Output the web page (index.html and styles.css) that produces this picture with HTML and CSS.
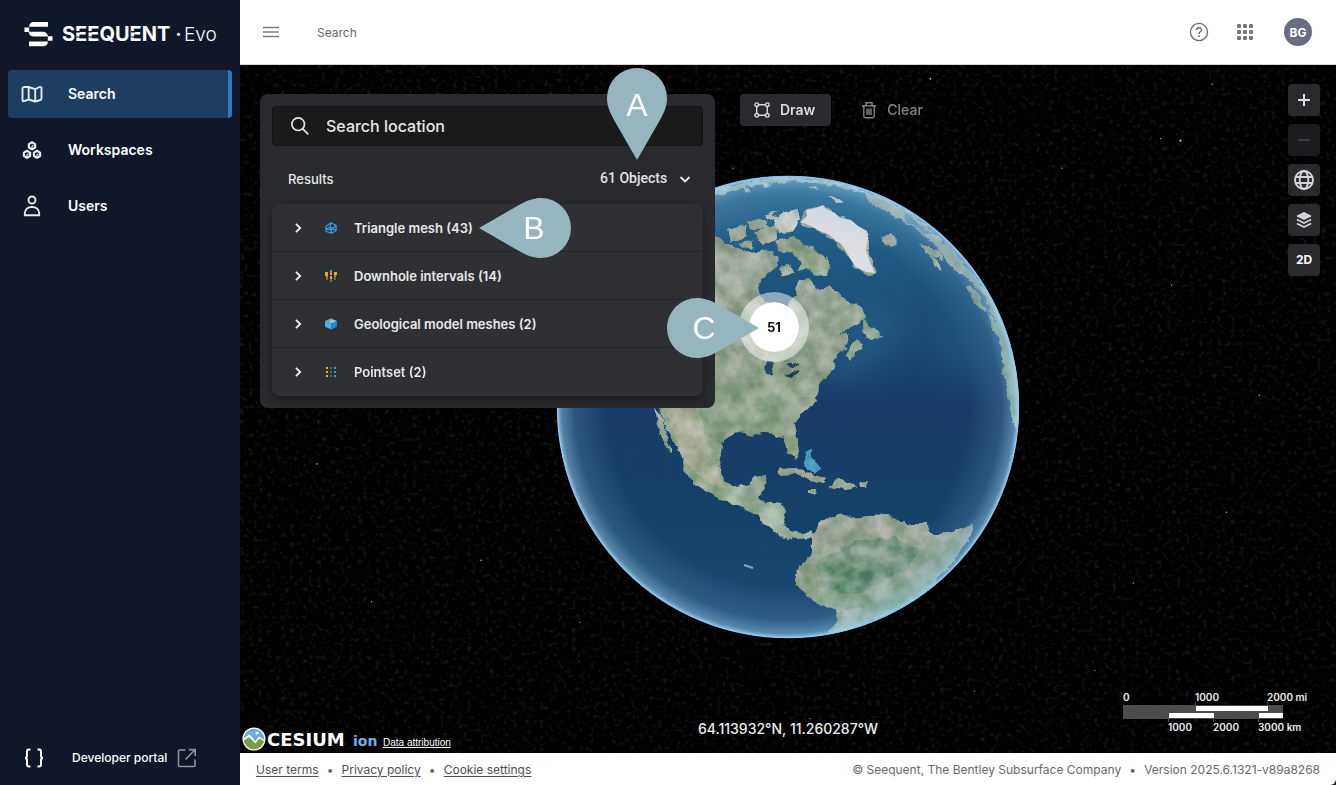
FILE: index.html
```html
<!DOCTYPE html>
<html lang="en">
<head>
<meta charset="utf-8">
<meta name="viewport" content="width=device-width, initial-scale=1">
<title>Seequent Evo – Search</title>
<link rel="stylesheet" href="styles.css">
</head>
<body>
<div class="app">
  <aside class="sidebar">
    <a class="brand" href="#" aria-label="Seequent Evo">
      <svg width="200" height="28" viewBox="0 0 200 28">
        <g fill="#fff">
          <path d="M5 6.200Q5.500 1 9.500 1H24V5.800H5z"/>
          <path d="M0.500 6.500H5.200V10.800H19Q23 10.800 24 15.300H28.500V19.800H23.800V15.600H10Q5.500 15.600 4.600 11H0.500z"/>
          <path d="M5 20.500H24Q23.500 25.300 19 25.300H5z"/>
          <text x="38" y="20" class="brand-name">SEEQUENT</text>
          <circle cx="154.500" cy="13.300" r="1.600"/>
          <text x="160" y="20" class="brand-product">Evo</text>
        </g>
        <path fill="#0f1729" d="M52 10H56V11.500H52zM64.200 10H68.200V11.500H64.200zM107 10H111V11.500H107zM52 15.500H56V16.500H52zM64.200 15.500H68.200V16.500H64.200zM107 15.500H111V16.500H107z"/>
      </svg>
    </a>
    <nav class="nav">
      <a class="nav-item active" href="#" aria-current="page">
        <svg width="24" height="24" viewBox="0 0 24 24" fill="none" stroke="#e4e9ef" stroke-width="1.900" stroke-linejoin="round"><path d="M2.500 6.500Q2.500 5 4 4.900L8.700 5 15.200 7.200 19.800 5Q21.500 4.500 21.500 6V16.500Q21.500 17.500 20.500 18L15.200 19.500 8.700 17.500 4 19.200Q2.500 19.600 2.500 18zM8.700 5V17.500M15.200 7.200V19.500"/></svg>
        Search
      </a>
      <a class="nav-item" href="#">
        <svg width="24" height="24" viewBox="0 0 24 24" fill="none" stroke="#e8eaee" stroke-width="2.200" stroke-linejoin="round"><path d="M12 4.300l3.100 1.800v3.400L12 11.300 8.900 9.500V6.100zM7 12.800l3.100 1.800v3.400L7 19.800l-3.100-1.800v-3.400zM17 12.800l3.100 1.800v3.400L17 19.800l-3.100-1.800v-3.400z"/><path d="M12 11V8.200l1.500-.9M7 19.500v-2.800l1.500-.9M17 19.500v-2.800l1.500-.9" stroke-width="1.200"/></svg>
        Workspaces
      </a>
      <a class="nav-item" href="#">
        <svg width="24" height="24" viewBox="0 0 24 24" fill="none" stroke="#e8eaee" stroke-width="1.900"><circle cx="12" cy="6" r="3.500"/><path d="M4.800 21.200V19.500C4.800 15.500 8 13 12 13s7.200 2.500 7.200 6.500V21.200z" stroke-linejoin="round"/></svg>
        Users
      </a>
    </nav>
    <a class="dev-link" href="#">
      <svg width="24" height="24" viewBox="0 0 24 24" fill="none" stroke="#fff" stroke-width="2"><path d="M8.500 3.500H7Q5 3.500 5 5.500V9.500Q5 12 3 12 5 12 5 14.500V18.500Q5 20.500 7 20.500H8.500M15.500 3.500H17Q19 3.500 19 5.500V9.500Q19 12 21 12 19 12 19 14.500V18.500Q19 20.500 17 20.500H15.500"/></svg>
      <span>Developer portal</span>
      <svg width="20" height="20" viewBox="0 0 20 20" fill="none" stroke="#8d939e" stroke-width="1.600"><path d="M8.500 2H2.500Q1.500 2 1.500 3V17.500Q1.500 18.500 2.500 18.500H17Q18 18.500 18 17.500V11.500M8.500 11.500L17.500 2.200M11.800 1.600H18.200V8"/></svg>
    </a>
  </aside>

  <div class="main">
    <header class="topbar">
      <button class="icon-button" aria-label="Toggle menu">
        <svg width="16" height="16" viewBox="0 0 16 16" stroke="#7c7f82" stroke-width="1.400"><path d="M0 3.500H16M0 8H16M0 12.500H16" /></svg>
      </button>
      <h1 class="page-title">Search</h1>
      <button class="icon-button" aria-label="Help">
        <svg width="20" height="20" viewBox="0 0 20 20"><circle cx="10" cy="10" r="8.600" fill="none" stroke="#66696c" stroke-width="1.300"/><path d="M7.500 8.200C7.500 5 12.600 5 12.500 7.900 12.500 9.800 10 9.800 10 12" fill="none" stroke="#66696c" stroke-width="1.300"/><circle cx="10" cy="14.200" r="0.900" fill="#66696c"/></svg>
      </button>
      <button class="icon-button" aria-label="Applications">
        <svg width="16" height="16" viewBox="0 0 16 16" fill="#74777a"><rect x="0" y="0" width="4" height="4" rx="1.300"/><rect x="6" y="0" width="4" height="4" rx="1.300"/><rect x="12" y="0" width="4" height="4" rx="1.300"/><rect x="0" y="6" width="4" height="4" rx="1.300"/><rect x="6" y="6" width="4" height="4" rx="1.300"/><rect x="12" y="6" width="4" height="4" rx="1.300"/><rect x="0" y="12" width="4" height="4" rx="1.300"/><rect x="6" y="12" width="4" height="4" rx="1.300"/><rect x="12" y="12" width="4" height="4" rx="1.300"/></svg>
      </button>
      <button class="avatar">BG</button>
    </header>

    <main class="map">
      <svg class="stars" aria-hidden="true">
        <filter id="dust" x="0" y="0" width="100%" height="100%"><feTurbulence type="fractalNoise" baseFrequency="0.22" numOctaves="3" seed="8"/><feColorMatrix values="0 0 0 0 0.600  0 0 0 0 0.620  0 0 0 0 0.620  2.200 0 0 0 -1.200"/></filter>
        <rect width="100%" height="100%" filter="url(#dust)" opacity="0.170"/>
        <g fill="#b9bcc0">
          <circle cx="85.800%" cy="11%" r="1.100"/><circle cx="84%" cy="10.700%" r="0.700"/><circle cx="63%" cy="2%" r="0.900"/><circle cx="75%" cy="15%" r="0.600"/><circle cx="88.700%" cy="2.800%" r="0.700"/><circle cx="7%" cy="58%" r="0.800"/><circle cx="35%" cy="11%" r="0.600"/><circle cx="45%" cy="15%" r="0.700"/><circle cx="81.500%" cy="75.300%" r="0.800"/><circle cx="90%" cy="65%" r="0.700"/><circle cx="78%" cy="88%" r="0.600"/><circle cx="12%" cy="78%" r="0.700"/><circle cx="22%" cy="72%" r="0.800"/><circle cx="31%" cy="81%" r="0.600"/><circle cx="85%" cy="32%" r="0.600"/><circle cx="93%" cy="48%" r="0.700"/><circle cx="52%" cy="95%" r="0.700"/><circle cx="67%" cy="91%" r="0.600"/>
        </g>
      </svg>

      <div class="globe-layer">
        <svg class="globe" width="468" height="468" viewBox="554 173 468 468" role="img" aria-label="Globe">
          <defs>
            <clipPath id="disc"><circle cx="788" cy="407" r="231"/></clipPath>
            <linearGradient id="ocean" x1="0" y1="0" x2="0" y2="1"><stop offset="0" stop-color="#2a6c95"/><stop offset="0.250" stop-color="#1c527c"/><stop offset="0.500" stop-color="#173c68"/><stop offset="0.750" stop-color="#154268"/><stop offset="1" stop-color="#1d4a77"/></linearGradient>
            <linearGradient id="land" x1="0" y1="0" x2="0" y2="1"><stop offset="0" stop-color="#a0aaa0"/><stop offset="0.400" stop-color="#97a595"/><stop offset="0.750" stop-color="#8ba48a"/><stop offset="1" stop-color="#a3b8aa"/></linearGradient>
            <radialGradient id="air"><stop offset="0.780" stop-color="#7fb6d6" stop-opacity="0"/><stop offset="0.920" stop-color="#7fb6d6" stop-opacity="0.200"/><stop offset="0.980" stop-color="#96c8e4" stop-opacity="0.500"/><stop offset="1" stop-color="#b8def5" stop-opacity="0.850"/></radialGradient>
            <filter id="soft" x="-50%" y="-50%" width="200%" height="200%" color-interpolation-filters="sRGB"><feGaussianBlur stdDeviation="16"/></filter>
            <filter id="terrain" filterUnits="userSpaceOnUse" x="550" y="170" width="480" height="480">
              <feTurbulence type="fractalNoise" baseFrequency="0.110" numOctaves="4" seed="4" result="n"/>
              <feDisplacementMap in="SourceGraphic" in2="n" scale="7" xChannelSelector="R" yChannelSelector="G"/>
              <feGaussianBlur stdDeviation="0.500" result="s"/>
              <feTurbulence type="fractalNoise" baseFrequency="0.055" numOctaves="5" seed="21"/>
              <feColorMatrix values="2 0 0 0 -0.550  1.500 0.200 0 0 -0.390  1.900 0 0 0 -0.550  0 0 0 0 0.500"/>
              <feComposite operator="in" in2="s" result="t"/>
              <feBlend in="t" in2="s" mode="soft-light"/>
            </filter>
          </defs>
          <g clip-path="url(#disc)">
            <rect x="554" y="173" width="468" height="468" fill="url(#ocean)"/>
            <g filter="url(#soft)">
              <path d="M850 290L905 325 880 360 830 385 825 360 850 330z" fill="#27638b" opacity="0.700"/>
              <path d="M945 300L975 350 970 390 940 345z" fill="#22608a" opacity="0.600"/>
              <path d="M700 190L780 200 760 225 715 230z" fill="#33658e" opacity="0.600"/>
            </g>
            <g filter="url(#terrain)">
              <g fill="url(#land)">
                <path d="M640 300L690 245 715 235 725 243 735 248 750 252 766 250 780 255 776 264 771 271 762 280 758 290 764 300 778 306 783 318 788 304 795 295 798 280 809 278 819 290 830 286 843 298 862 308 866 317 853 325 846 331 835 337 846 333 848 338 843 350 836 356 832 370 822 381 816 400 805 412 794 423 796 435 799 451 796 461 788 451 783 437 767 433 750 436 737 432 724 440 720 463 724 482 737 487 750 485 754 476 767 474 764 489 759 500 780 503 786 510 783 524 790 532 801 534 812 529 813 538 797 539 780 536 769 527 757 515 737 505 717 498 697 485 685 473 683 460 673 440 664 423 660 405z"/>
                <path d="M654 405L661 415 666 432 671 452 664 444 657 425z"/>
                <path d="M813 533L823 520 840 514 850 518 870 516 887 515 900 523 927 523 933 535 953 532 974 524 968 540 953 563 930 587 907 604 880 617 853 628 825 640 837 620 838 611 820 605 805 593 795 582 798 567 810 557 813 543z"/>
                <path d="M778 469L790 467 802 470 826 479 822 484 810 480 797 474 779 475zM829 488L836 480 853 483 859 487 847 490zM861 482L868 482 867 486 860 486zM808 490L816 490 815 493 808 493z"/>
                <path d="M865 194L880 196 903 209 927 226 953 251 977 279 997 303 1012 337 1022 377 1022 437 1014 425 1010 405 1003 372 1000 340 992 327 987 303 979 289 966 277 953 268 945 258 937 247 920 232 907 223 887 212 868 202z"/>
                <path d="M919 242L930 249 940 252 944 260 935 257 925 252zM930 255L937 260 943 269 934 265zM966 284L977 287 985 299 987 314 974 303zM863 318L869 327 880 331 882 338 874 339 864 335zM848 347L858 340 863 344 850 360 847 357zM881 237L889 233 896 237 895 244 887 247z"/>
                <path d="M782 239L795 236 803 243 812 248 829 260 828 278 815 275 808 268 797 271 802 263 793 254zM728 230L746 225 746 237 731 242zM747 222L766 219 768 228 751 229zM753 232L777 225 778 239 762 245zM775 241L790 238 795 252 783 254zM778 266L791 264 794 273 783 277zM738 243L754 241 752 248 740 247z"/>
              </g>
              <path d="M772 218L785 213 798 210 800 220 791 232 780 233zM764 216L776 211 772 220z" fill="#c3cac8"/>
              <path d="M700 190L760 180 790 178 840 182 875 196 840 187 790 181 750 186 715 197z" fill="#9fb6b4"/>
              <path d="M828 196L835 197 844 201 838 204zM740 188L750 189 746 191zM765 183L772 185 766 187zM810 188L820 189 812 190z" fill="#c3cecf"/>
            </g>
            <g filter="url(#terrain)">
              <path d="M815 565Q830 550 858 541L895 538 920 549 905 570 860 594 825 590z" fill="#4c856b" opacity="0.550"/>
              <path d="M665 408L697 405 710 450 726 490 705 480 684 460z" fill="#b6b0a2" opacity="0.600"/>
              <path d="M842 610L862 608 855 625 838 635z" fill="#b5b3ad" opacity="0.700"/>
              <path d="M766 360L775 362 772 375 767 374zM784 363L800 363 790 368zM785 375L801 370 792 377z" fill="#254b66"/>
              <path d="M805 450L812 449 812 460 822 468 815 473 803 464z" fill="#4596bd"/>
              <path d="M970 283L984 295 998 328 987 309z" fill="#2e6d90"/>
              <path d="M905 213L935 234 928 234 906 222z" fill="#4f8397"/>
            </g>
            <g filter="url(#terrain)">
              <path d="M801 223L806 209 824 206 836 214 853 221 868 233 868 251 877 274 869 276 856 268 844 251 834 241 821 233 811 229z" fill="#9aa79b"/>
            </g>
            <path d="M801 222L807 216 806 210 816 208 823 205 826 209 835 213 840 218 851 220 858 226 867 231 868 238 866 250 870 262 875 273 866 272 856 267 851 260 846 251 841 244 835 240 828 234 820 231 811 226z" fill="#dcdee3"/>
            <g fill="none" stroke="#264562" opacity="0.500"><path d="M630 450L672 462 667 486 629 471zM723 545L782 554 782 580 722 576z"/></g>
            <path d="M744 565L753 568" stroke="#7fa9b9" stroke-width="2"/>
            <circle cx="788" cy="407" r="231" fill="url(#air)"/>
          </g>
          <circle cx="788" cy="407" r="230.500" fill="none" stroke="#8cc5f4" stroke-width="1.300"/>
        </svg>
      </div>

      <button class="cluster" aria-label="51 objects at this place">51</button>

      <div class="overlay">
        <section class="panel">
          <label class="search">
            <svg width="20" height="20" viewBox="0 0 20 20" fill="none" stroke="#e4e4e5" stroke-width="1.700"><circle cx="8.200" cy="8.200" r="6.300"/><path d="M12.800 12.800L18.300 18.300"/></svg>
            <input type="search" placeholder="Search location" aria-label="Search location">
          </label>
          <div class="results-head">
            <h2>Results</h2>
            <div class="count">
              <select aria-label="Result type"><option>61 Objects</option></select>
              <svg width="12" height="12" viewBox="0 0 12 12" fill="none" stroke="#e8e8e8" stroke-width="1.800"><path d="M1.500 4L6 8.500 10.500 4"/></svg>
            </div>
          </div>
          <ul class="results">
            <li><button aria-expanded="false">
              <svg width="12" height="12" viewBox="0 0 12 12" fill="none" stroke="#f0f0f0" stroke-width="1.800"><path d="M4 1.800L8.200 6 4 10.200"/></svg>
              <svg width="12" height="12" viewBox="0 0 12 12" fill="none" stroke="#359ee6" stroke-width="1.200" stroke-linejoin="round"><path d="M6 0.700L11 3.200 11.200 8.500 6.500 11.300 1.200 9.500 0.800 4.500zM6 0.700L5.200 5 0.800 7.200 6.500 8 11 3.200M5.200 5L6.500 11.300M5.200 5L11.200 8.500"/></svg>
              Triangle mesh (43)</button></li>
            <li><button aria-expanded="false">
              <svg width="12" height="12" viewBox="0 0 12 12" fill="none" stroke="#f0f0f0" stroke-width="1.800"><path d="M4 1.800L8.200 6 4 10.200"/></svg>
              <svg width="12" height="12" viewBox="0 0 12 12"><path fill="#f6a615" d="M0 2H3V6H0zM9 2H12V5H9zM5 6H7V9H5z"/><path fill="#3c9ae0" d="M5 0H7V3H5z"/><path fill="#c9702b" d="M1 6H3V8H1zM9 5H11V7H9z"/><path fill="#477f58" d="M1 8H3V10H1zM5 9H7V12H5zM9 7H11V10H9z"/><path fill="#f6a615" d="M5 3H7V5H5z"/></svg>
              Downhole intervals (14)</button></li>
            <li><button aria-expanded="false">
              <svg width="12" height="12" viewBox="0 0 12 12" fill="none" stroke="#f0f0f0" stroke-width="1.800"><path d="M4 1.800L8.200 6 4 10.200"/></svg>
              <svg width="12" height="12" viewBox="0 0 12 12"><path fill="#7fc9ea" d="M0 3.200L6 0.500 12 3 7 5.500z"/><path fill="#74a98c" d="M0 3.200L6 0.500 8 1.400 2.500 4z"/><path fill="#47aff0" d="M0 3.200L6.500 5.500V11.500L0 8.800z"/><path fill="#2487d6" d="M6.500 5.500L12 3V8.500L6.500 11.500z"/></svg>
              Geological model meshes (2)</button></li>
            <li><button aria-expanded="false">
              <svg width="12" height="12" viewBox="0 0 12 12" fill="none" stroke="#f0f0f0" stroke-width="1.800"><path d="M4 1.800L8.200 6 4 10.200"/></svg>
              <svg width="12" height="12" viewBox="0 0 12 12"><path fill="#f9ab0d" d="M1 1H3V3H1zM1 5H3V7H1zM1 9H3V11H1z"/><path fill="#3f7352" d="M5 1H7V3H5zM5 5H7V7H5zM5 9H7V11H5z"/><path fill="#2f9be8" d="M9 1H11V3H9zM9 5H11V7H9zM9 9H11V11H9z"/></svg>
              Pointset (2)</button></li>
          </ul>
        </section>

        <div class="tools">
          <button class="tool draw">
            <svg width="16" height="16" viewBox="0 0 16 16" fill="none" stroke="#d9d9da" stroke-width="1.400"><path d="M4.500 2.700H11.500M4.500 13.300H11.500M2.700 4.500V11.500M13.300 4.500V11.500"/><circle cx="2.700" cy="2.700" r="1.800"/><circle cx="13.300" cy="2.700" r="1.800"/><circle cx="2.700" cy="13.300" r="1.800"/><circle cx="13.300" cy="13.300" r="1.800"/></svg>
            Draw
          </button>
          <button class="tool clear">
            <svg width="16" height="18" viewBox="0 0 16 18" fill="none" stroke="#858585" stroke-width="1.400"><path d="M1 4.700H15M5 4.500V1.700H11V4.500M2.800 4.700V15Q2.800 16.700 4.500 16.700H11.500Q13.200 16.700 13.200 15V4.700M6 7.500V14M8 7.500V14M10 7.500V14"/></svg>
            Clear
          </button>
        </div>

        <div class="controls">
          <button aria-label="Zoom in"><svg width="20" height="20" viewBox="0 0 20 20" stroke="#dedede" stroke-width="2"><path d="M4 10H16M10 4V16"/></svg></button>
          <button aria-label="Zoom out" disabled><svg width="20" height="20" viewBox="0 0 20 20" stroke="#3a3b3e" stroke-width="2"><path d="M4 10H16"/></svg></button>
          <button aria-label="Globe view"><svg width="20" height="20" viewBox="0 0 20 20" fill="none" stroke="#d6d6d6" stroke-width="1.900"><circle cx="10" cy="10" r="9"/><ellipse cx="10" cy="10" rx="4.300" ry="9"/><path d="M1.800 7H18.200M1.800 13H18.200"/></svg></button>
          <button aria-label="Layers"><svg width="18" height="18" viewBox="0 0 18 18"><path d="M9 1L16 4.500Q17 5 16 5.500L9 9 2 5.500Q1 5 2 4.500z" fill="#d4d4d4"/><path d="M1.800 8.500L9 12 16.200 8.500M1.800 12.500L9 16 16.200 12.500" fill="none" stroke="#d4d4d4" stroke-width="1.700"/></svg></button>
          <button>2D</button>
        </div>
      </div>

      <div class="pin pin-a"><svg width="60" height="92" viewBox="0 0 60 92"><path d="M30 92L7 52C2 43 0 37 0 30A30 30 0 0 1 60 30C60 37 58 43 53 52z"/></svg><span>A</span></div>
      <div class="pin pin-b"><svg width="92" height="60" viewBox="0 0 92 60"><path d="M0 30L40 7C49 2 55 0 62 0A30 30 0 0 1 62 60C55 60 49 58 40 53z"/></svg><span>B</span></div>
      <div class="pin pin-c"><svg width="92" height="60" viewBox="0 0 92 60"><path d="M92 30L52 7C43 2 37 0 30 0A30 30 0 0 0 30 60C37 60 43 58 52 53z"/></svg><span>C</span></div>

      <div class="map-foot">
        <div class="credit">
          <svg width="137" height="26" viewBox="0 0 137 26" role="img" aria-label="Cesium ion">
            <circle cx="12" cy="13" r="11.500" fill="#fff"/>
            <path d="M1.700 13A10.300 10.300 0 0 1 22.300 13z" fill="#6cabe0"/>
            <path d="M1.700 13A10.300 10.300 0 0 0 22.300 13z" fill="#799b43"/>
            <path d="M2 12.500L7 8.500 10 11 13 15 17 10.500 22.300 14V15.500L17.500 12.500 13.500 17.500 10 14 7 10.800 2 14.500z" fill="#fff"/>
            <circle cx="15" cy="7" r="1.500" fill="#fff"/>
            <text x="25" y="20" class="cesium-name">CESIUM</text>
            <text x="111" y="20" class="cesium-ion">ion</text>
          </svg>
          <a href="#">Data attribution</a>
        </div>
        <output class="coords">64.113932°N, 11.260287°W</output>
        <svg class="scale" width="184" height="44" viewBox="0 0 184 44" role="img" aria-label="Map scale">
          <path fill="#4b4b4d" d="M0 14H160V28H0zM72 11H73V14H72zM144 11H145V14H144zM45 28H46V31H45zM90 28H91V31H90zM135 28H136V31H135z"/>
          <path fill="#fff" d="M73 15H145V20H73zM46 22H91V27H46zM136 22H160V27H136z"/>
          <g class="scale-text"><text x="0" y="10">0</text><text x="72" y="10">1000</text><text x="144" y="10">2000 mi</text><text x="45" y="40">1000</text><text x="90" y="40">2000</text><text x="135" y="40">3000 km</text></g>
        </svg>
      </div>
    </main>

    <footer class="footer">
      <a href="#">User terms</a><i>•</i><a href="#">Privacy policy</a><i>•</i><a href="#">Cookie settings</a>
      <span class="legal">© Seequent, The Bentley Subsurface Company</span><i>•</i><span>Version 2025.6.1321-v89a8268</span>
    </footer>
  </div>
</div>
</body>
</html>
```
FILE: styles.css
```css
* { box-sizing: border-box; }
body { margin: 0; background: #222; font-family: Inter, "Liberation Sans", sans-serif; font-size: 14px; }
button { border: 0; padding: 0; background: none; font: inherit; color: inherit; cursor: pointer; }
svg { display: block; flex: none; }
a { color: inherit; }

.app { display: grid; grid-template-columns: 240px minmax(0, 1fr); min-height: 100vh; }

.sidebar { display: flex; flex-direction: column; background: #0f1729; color: #fff; }
.brand { display: flex; align-items: center; height: 70px; padding: 0 16px 0 24px; }
.brand-name { font-size: 20px; font-weight: 700; }
.brand-product { font-size: 19px; font-weight: 300; }
.nav { display: flex; flex-direction: column; gap: 8px; padding: 0 8px; }
.nav-item { display: flex; align-items: center; gap: 24px; height: 48px; padding: 0 12px; border-right: 4px solid transparent; border-radius: 4px; font-weight: 600; line-height: 16px; text-decoration: none; }
.nav-item.active { background: #1d3d62; border-right-color: #3079bd; }
.dev-link { display: flex; align-items: center; gap: 10px; margin-top: auto; height: 54px; padding: 0 22px; font-size: 12px; font-weight: 500; line-height: 16px; text-decoration: none; }
.dev-link span { padding-left: 16px; }

.main { display: flex; flex-direction: column; min-width: 0; }
.topbar { display: flex; align-items: center; gap: 14px; height: 65px; padding: 0 24px 0 15px; background: #fff; border-bottom: 1px solid #d6d6d6; }
.icon-button { display: grid; place-items: center; width: 32px; height: 32px; }
.page-title { flex: 1; margin: 0; padding-left: 16px; color: #66696c; font-size: 12px; font-weight: 400; }
.avatar { width: 28px; height: 28px; margin-left: 9px; border-radius: 50%; background: #686d80; color: #fff; font-size: 12px; font-weight: 700; }

.map { position: relative; display: flex; flex-direction: column; justify-content: space-between; flex: 1; overflow: hidden; background: #000; }
.stars { position: absolute; inset: 0; width: 100%; height: 100%; }
.globe-layer { position: absolute; inset: 0; display: grid; place-items: center; padding-bottom: 4px; }
.cluster { position: absolute; left: calc(50% - 49px); top: 227px; width: 70px; height: 70px; border: 10px solid rgba(255, 255, 255, .5); border-radius: 50%; background: #fff; background-clip: padding-box; color: #111; font-size: 13px; font-weight: 700; }

.overlay { position: relative; display: flex; align-items: flex-start; padding: 19px 16px 0 20px; }
.panel { width: 455px; margin-top: 10px; padding: 12px; border-radius: 8px; background: #292a2e; color: #e8e8e9; }
.search { display: flex; align-items: center; gap: 16px; height: 40px; padding: 0 17px; border: 1px solid #121212; background: #1a1a1a; border-radius: 4px; }
.search input { flex: 1; min-width: 0; padding: 0; border: 0; outline: 0; background: none; color: #e8e8e9; font: 500 16px Inter, sans-serif; }
.search input::placeholder { color: #e8e8e9; opacity: 1; }
.results-head { display: flex; align-items: center; justify-content: space-between; height: 58px; padding: 8px 12px 0 16px; }
.results-head h2 { margin: 0; font-size: 13px; font-weight: 500; }
.count { display: grid; align-items: center; }
.count > * { grid-area: 1 / 1; }
.count select { appearance: none; padding: 0 23px 2px 0; border: 0; outline: 0; background: none; color: #e2e2e3; font: 500 14px Roboto, sans-serif; }
.count svg { justify-self: end; pointer-events: none; }
.results { margin: 0; padding: 0; list-style: none; border-radius: 8px; background: #2f3034; box-shadow: 0 4px 10px rgba(0, 0, 0, .35); }
.results li { height: 48px; border-bottom: 1px solid #242529; }
.results li:last-child { border-bottom: 0; }
.results button { display: flex; align-items: center; width: 100%; height: 100%; padding: 0 20px; font-size: 13px; font-weight: 600; text-align: left; }
.results button svg { margin-right: 21px; }
.results button svg + svg { margin-right: 17px; }

.tools { display: flex; gap: 16px; margin: 10px 0 0 25px; }
.tool { display: flex; align-items: center; gap: 10px; height: 32px; padding: 0 14px; border-radius: 4px; font-weight: 600; line-height: 16px; }
.draw { background: #292a2e; color: #dcdcdd; padding-right: 16px; }
.clear { color: #858585; font-weight: 500; }
.controls { display: flex; flex-direction: column; gap: 8px; margin-left: auto; }
.controls button { display: grid; place-items: center; width: 32px; height: 32px; border-radius: 4px; background: #292a2e; color: #fff; font-size: 12px; font-weight: 700; line-height: 14px; }
.controls button:disabled { background: #1b1c20; }

.pin { position: absolute; display: grid; place-items: center; color: #fff; font: 32px "Liberation Sans", sans-serif; }
.pin > * { grid-area: 1 / 1; }
.pin path { fill: #97b5bf; }
.pin-a { left: 367px; top: 3px; }
.pin-a span { padding-bottom: 18px; }
.pin-b { left: 239px; top: 133px; }
.pin-b span { padding-left: 18px; }
.pin-c { left: 427px; top: 233px; }
.pin-c span { padding-right: 18px; }

.map-foot { position: relative; display: grid; grid-template-columns: 1fr auto 1fr; align-items: end; }
.credit { display: flex; align-items: flex-end; gap: 4px; padding: 0 0 1px 2px; }
.credit a { padding-bottom: 3px; color: #fff; font: 10px/13px "Liberation Sans", sans-serif; }
.cesium-name { fill: #fff; font: 700 18px "DejaVu Sans", sans-serif; }
.cesium-ion { fill: #6cb0e6; font: 700 14px "DejaVu Sans", sans-serif; }
.coords { padding-bottom: 16px; color: #ededed; font-weight: 500; }
.scale { justify-self: end; margin: 0 29px 18px 0; }
.scale-text { fill: #ededed; font-size: 10px; font-weight: 600; }

.footer { display: flex; align-items: center; height: 32px; padding: 0 16px; border-bottom-right-radius: 6px; background: #fff; color: #66696c; font-size: 12px; }
.footer a { color: #4c5055; text-underline-offset: 2px; }
.footer i { width: 23px; font-style: normal; text-align: center; }
.legal { margin-left: auto; }
```
